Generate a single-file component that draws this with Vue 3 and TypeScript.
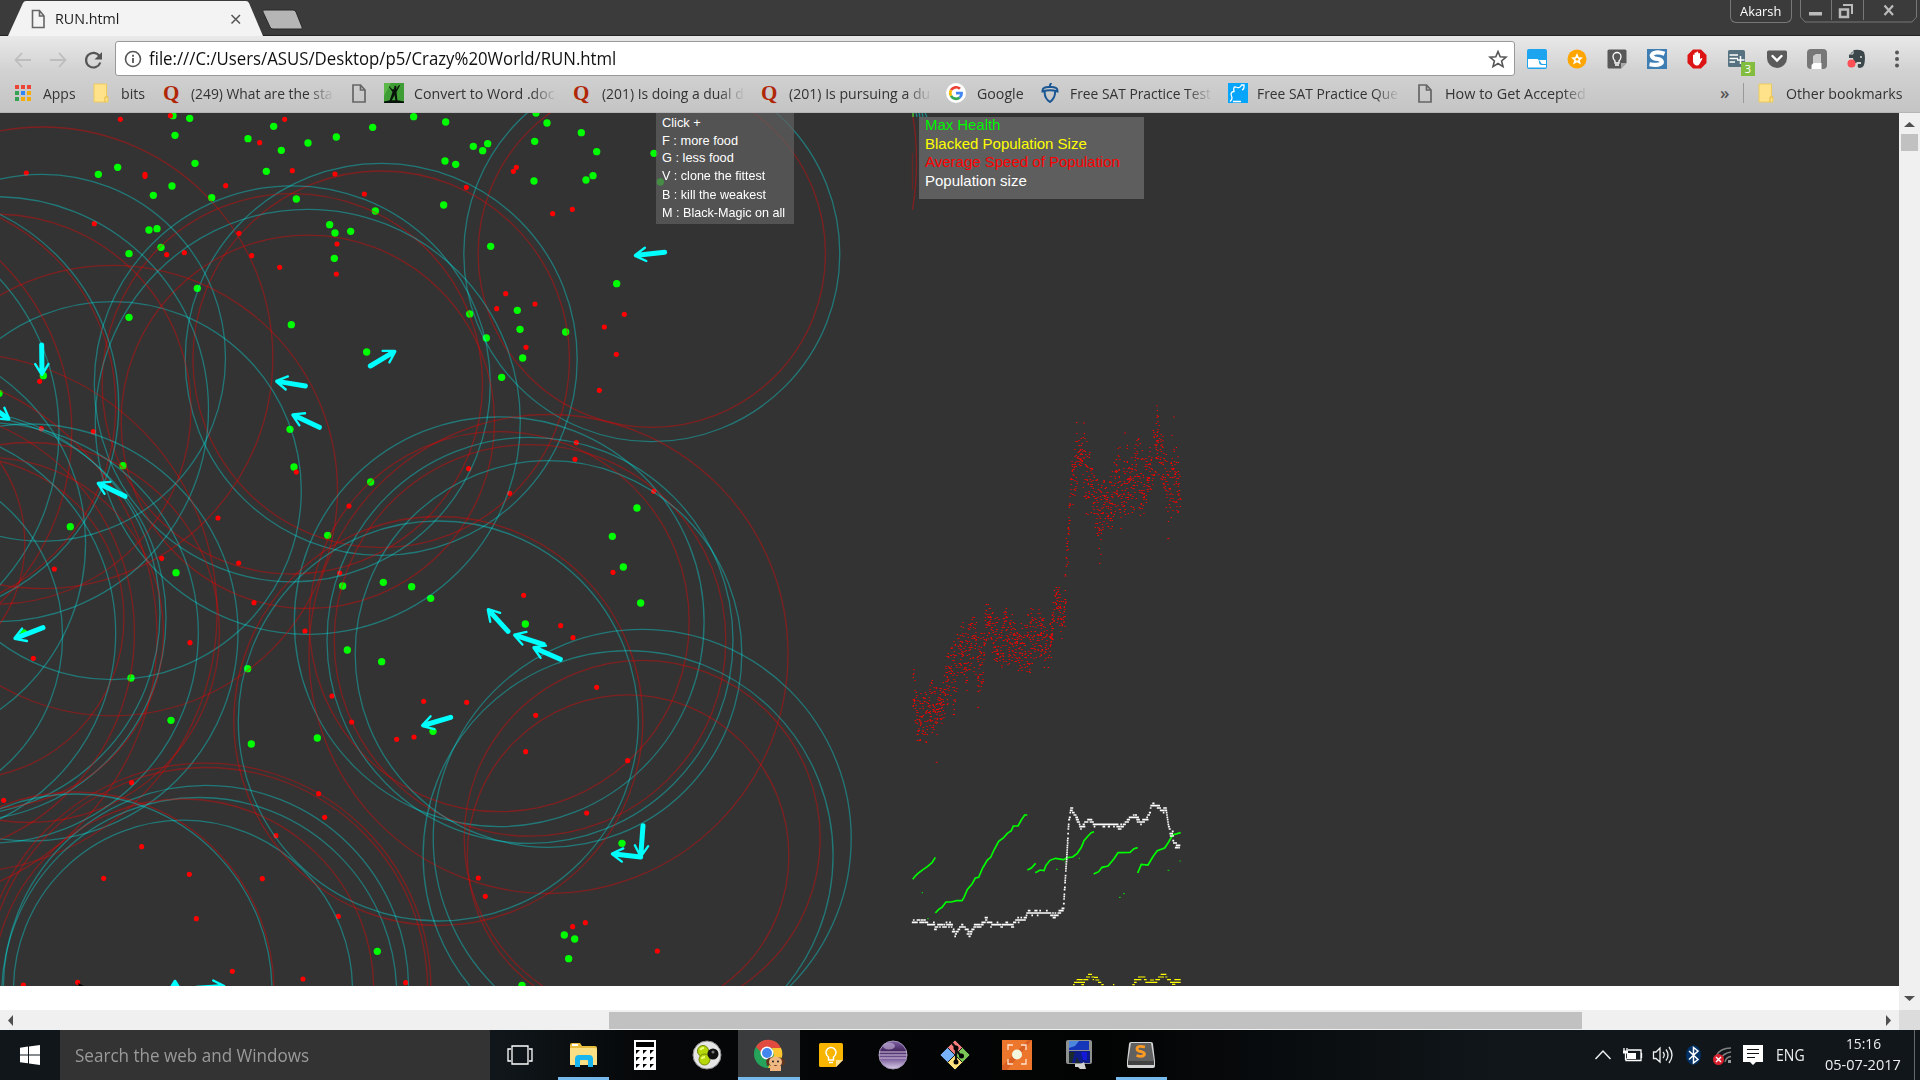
<script setup lang="ts">
type Pt = [number, number]

/* Squeezes a text run to a given pixel width */
const vFit = {
  mounted(el: HTMLElement, b: { value: number }) {
    const w = el.offsetWidth
    if (w > 0) {
      el.style.transform = `scaleX(${b.value / w})`
      el.style.width = `${w}px`
      el.style.marginRight = `${b.value - w}px`
    }
  },
}

const bookmarks = [
  { w: 78, gap: 28, icon: 'apps', text: 'Apps', tw: 33 },
  { w: 70, gap: 28, icon: 'folder', text: 'bits', tw: 24 },
  { w: 189, gap: 28, icon: 'quora', text: '(249) What are the sta', tw: 142 },
  { w: 32, gap: 28, icon: 'page', text: '', tw: 0 },
  { w: 189, gap: 30, icon: 'word', text: 'Convert to Word .doc', tw: 141 },
  { w: 188, gap: 29, icon: 'quora', text: '(201) Is doing a dual d', tw: 142 },
  { w: 185, gap: 28, icon: 'quora', text: '(201) Is pursuing a du', tw: 141 },
  { w: 95, gap: 30.5, icon: 'google', text: 'Google', tw: 47 },
  { w: 187, gap: 29, icon: 'acorn', text: 'Free SAT Practice Test', tw: 141 },
  { w: 190, gap: 29, icon: 'cat', text: 'Free SAT Practice Que', tw: 141 },
  { w: 180, gap: 27, icon: 'page', text: 'How to Get Accepted', tw: 141 },
]

/* cx, cy, radius of food sense, radius of poison sense */
const senses: [number, number, number, number][] = [
  [651.8, 253.7, 188, 173.7], [381.2, 359.3, 196, 188.3], [292.3, 383.8, 198, 190.2],
  [307.8, 421.8, 212.5, 186.7], [42, 357.8, 183.5, 230.8], [112.3, 490.6, 189, 225.2],
  [-4, 409.2, 212.5, 195], [-94.3, 405.4, 213, 210], [-168, 432, 227, 239.8],
  [29.5, 632.5, 208.5, 190], [-119, 543, 204.6, 143.8], [-113, 636, 175.6, 270],
  [-43, 613, 203, 260], [-37, 618, 203, 161], [-91.6, 633, 207.3, 226],
  [-12, 633, 210.3, 175.5], [206, 988, 202.6, 224.8], [199.2, 995, 197.5, 0],
  [206.5, 988.5, 0, 221], [183, 989.7, 169.5, 190.7], [75, 991, 197, 199],
  [499.2, 621.7, 204.9, 190], [530, 640.4, 203, 195.8], [548.5, 654, 193.3, 239.5],
  [438.3, 721, 200, 204.5], [642.2, 838.4, 209, 178], [628.1, 855.6, 205, 160.8],
]

/* World tiles: coordinates are in thirds of a pixel */
interface Tile { x: number; y: number; food: Pt[]; poison: Pt[]; bots: [number, number, number, number][] }
const tiles: Tile[] = [
  {
    x: 0, y: 110,
    food: [[519, 17], [569, 25], [525, 76], [744, 86], [821, 49], [844, 121], [924, 99], [1009, 81], [1118, 52], [1241, 20], [585, 160], [353, 172], [295, 193], [799, 184], [516, 228], [460, 256], [635, 263], [889, 267], [1126, 303], [447, 360], [471, 356], [989, 344], [1005, 369], [1052, 364], [483, 412], [387, 431], [1003, 445], [592, 535], [387, 622], [874, 644], [1100, 726], [130, 797], [-3, 850], [870, 958], [369, 1067], [882, 1071], [1112, 1116], [211, 1250], [983, 1276]],
    poison: [[361, 28], [511, 17], [854, 28], [779, 98], [79, 189], [435, 193], [435, 199], [877, 182], [1005, 192], [677, 227], [1093, 252], [283, 341], [717, 370], [1011, 402], [500, 434], [553, 428], [755, 437], [839, 472], [1009, 492], [119, 814], [124, 956], [280, 965], [889, 1086], [1047, 1188], [654, 1224]],
    bots: [[125, 705, 126, 797], [1111, 768, 1188, 722], [916, 828, 826, 813], [958, 952, 875, 913], [375, 1159, 291, 1118], [-40, 880, 30, 930]],
  },
  {
    x: 430, y: 110,
    food: [[318, 9], [47, 36], [351, 39], [454, 68], [314, 94], [130, 109], [173, 101], [158, 122], [500, 125], [672, 130], [45, 153], [77, 163], [312, 213], [489, 197], [468, 210], [691, 216], [41, 285], [182, 409], [560, 521], [262, 601], [119, 612], [270, 658], [407, 666], [169, 684], [278, 744], [215, 802], [621, 1194], [547, 1279]],
    poison: [[259, 172], [250, 184], [109, 232], [427, 298], [368, 311], [227, 551], [315, 582], [200, 596], [583, 613], [523, 651], [288, 712], [559, 733], [508, 841], [439, 998], [435, 1048], [116, 1076], [239, 1150], [671, 1144]],
    bots: [[704, 427, 612, 437]],
  },
  {
    x: 0, y: 545,
    food: [[528, 83], [1028, 123], [1150, 112], [1235, 125], [1292, 160], [71, 264], [1042, 315], [1145, 350], [743, 371], [393, 399], [513, 526], [952, 579], [754, 597], [1299, 559], [1132, 1219]],
    poison: [[163, 72], [485, 40], [716, 54], [1019, 84], [762, 173], [915, 258], [570, 293], [100, 340], [996, 453], [1271, 469], [1055, 531], [1242, 576], [1190, 583], [395, 713], [956, 746], [11, 766], [974, 817], [828, 872], [425, 905], [311, 1000], [568, 988], [787, 1001], [1015, 1114], [589, 1121], [697, 1279], [909, 1302], [1217, 1313], [233, 1312], [70, 1320]],
    bots: [[129, 248, 41, 282], [525, 1400, 525, 1305], [590, 1330, 676, 1324]],
  },
  {
    x: 430, y: 545,
    food: [[580, 66], [632, 174], [286, 237], [576, 895], [403, 1170], [434, 1182], [416, 1241], [276, 1321]],
    poison: [[549, 82], [281, 151], [392, 242], [429, 278], [500, 427], [110, 472], [317, 511], [287, 620], [593, 647], [470, 804], [145, 999], [166, 1054], [466, 1133], [428, 1145], [682, 1218]],
    bots: [[62, 517, -26, 543], [234, 259, 172, 191], [340, 298, 250, 269], [391, 343, 308, 306], [639, 842, 632, 937], [632, 936, 543, 926]],
  },
]

function body([x1, y1, x2, y2]: number[]): string {
  const l = Math.hypot(x2 - x1, y2 - y1)
  const ux = (x2 - x1) / l
  const uy = (y2 - y1) / l
  return `M${x1} ${y1}L${x2 - ux * 16} ${y2 - uy * 16}`
}
function wings([x1, y1, x2, y2]: number[]): string {
  const l = Math.hypot(x2 - x1, y2 - y1)
  const ux = (x2 - x1) / l
  const uy = (y2 - y1) / l
  const p = (b: number, s: number) => `${x2 - ux * b - uy * s} ${y2 - uy * b + ux * s}`
  return `M${p(35, 20)}L${p(3, 1)}L${p(3, -1)}L${p(35, -20)}M${p(3, 0)}L${p(18, 8)}L${p(18, -8)}Z`
}

let seed = 20170705
function rnd(): number {
  seed = (seed * 1664525 + 1013904223) % 4294967296
  return seed / 4294967296
}

/* Average speed plot: x, upper and lower bound of the cloud */
const cloud: [number, number, number][] = [
  [68, 810, 930], [76, 900, 1030], [85, 930, 1075], [95, 840, 1040], [108, 900, 1080], [120, 840, 1020], [135, 880, 1060], [145, 890, 1010], [158, 860, 1000], [168, 790, 950], [180, 770, 920], [190, 750, 990], [205, 700, 850], [218, 690, 850], [228, 700, 920], [240, 690, 870], [255, 660, 860], [265, 690, 920], [278, 730, 900], [286, 635, 760], [300, 640, 740], [310, 680, 830], [330, 670, 830], [352, 640, 830], [370, 670, 820], [385, 690, 850], [400, 690, 840], [415, 660, 860], [435, 630, 820], [455, 660, 830], [470, 710, 850], [485, 670, 790], [493, 590, 730], [505, 585, 700], [515, 630, 750], [524, 600, 700], [526, 480, 560], [531, 420, 520], [536, 330, 420], [542, 200, 350], [550, 180, 350], [558, 100, 290], [570, 140, 270], [580, 110, 320], [590, 160, 380], [600, 190, 370], [612, 240, 400], [628, 280, 500], [640, 250, 400], [655, 270, 450], [670, 210, 400], [685, 160, 370], [695, 250, 450], [705, 150, 400], [720, 190, 380], [738, 130, 350], [755, 170, 390], [770, 210, 330], [785, 120, 300], [800, 50, 240], [812, 90, 290], [825, 200, 330], [835, 180, 440], [850, 100, 380], [862, 180, 370], [870, 230, 390],
]
const speedBright: string[] = []
const speedDim: string[] = []
for (let i = 0; i < cloud.length - 1; i++) {
  const [xa, la, ha] = cloud[i]
  const [xb, lb, hb] = cloud[i + 1]
  const n = Math.max(3, Math.round((xb - xa) * 2))
  for (let k = 0; k < n; k++) {
    const t = rnd()
    const lo = la + (lb - la) * t
    const hi = ha + (hb - ha) * t
    const x = Math.round((xa + (xb - xa) * t) / 3) * 3
    const f = rnd() < 0.5 ? rnd() : (rnd() + rnd()) / 2
    const y = Math.round((lo + (hi - lo) * f) / 3) * 3 + 1.5
    if (rnd() < 0.55) speedBright.push(`M${x - 1} ${y}h4`)
    else speedDim.push(`M${x} ${y}h6`)
  }
}
const speedBrightPath = speedBright.join('')
const speedDimPath = speedDim.join('')

const population: Pt[] = [[68, 424], [76, 430], [84, 420], [95, 428], [105, 422], [115, 433], [130, 434], [138, 440], [150, 434], [165, 440], [180, 430], [188, 446], [197, 462], [205, 450], [216, 436], [228, 446], [238, 462], [248, 448], [260, 436], [272, 438], [288, 420], [300, 430], [318, 434], [335, 438], [355, 432], [370, 440], [378, 420], [405, 418], [416, 392], [425, 402], [440, 395], [455, 402], [480, 398], [492, 412], [505, 402], [520, 388], [524, 330], [530, 235], [536, 130], [543, 86], [550, 100], [560, 110], [573, 145], [585, 128], [603, 116], [612, 136], [640, 135], [680, 135], [692, 145], [705, 130], [722, 112], [740, 115], [753, 128], [770, 118], [788, 70], [800, 80], [815, 90], [828, 85], [835, 130], [842, 170], [848, 155], [850, 185], [860, 197], [870, 195]]
const popDots: string[] = []
for (let i = 0; i < population.length - 1; i++) {
  const [xa, ya] = population[i]
  const [xb, yb] = population[i + 1]
  const n = Math.max(1, Math.ceil(Math.max((xb - xa) / 1.6, Math.abs(yb - ya) / 7)))
  for (let k = 0; k < n; k++) {
    const t = k / n
    const r = rnd()
    const j = r < 0.1 ? -1 : r > 0.9 ? 1 : 0
    const y = (Math.round((ya + (yb - ya) * t) / 7) + j) * 7
    popDots.push(`M${(xa + (xb - xa) * t - 2.5).toFixed(1)} ${y}h5`)
  }
}
const popPath = popDots.join('')

const health = [
  '68,298 76,288 84,280 100,268 112,260 126,248 136,232',
  '136,399 146,388 156,382 168,366 184,366 200,362 216,362 222,352 232,328 246,312 256,294 266,292 278,264 292,240 302,232 312,210 326,184 340,174 352,160 364,152 370,138 384,138 394,120 404,105 412,105',
  '412,270 424,264 437,250',
  '436,278 450,270 462,272 468,256 480,241 496,235 520,239 532,233 548,231 562,220 574,202 582,182 594,168 604,158 612,155',
  '611,282 626,275 636,262 654,258 672,236 684,218 720,217 732,206 743,203',
  '743,279 754,253 774,255 790,228 802,212 824,204 836,186 848,165 862,161 872,158',
]
</script>

<template>
  <div class="screen">
    <header class="titlebar">
      <svg class="tabshape" width="310" height="36" viewBox="0 0 310 36">
        <path d="M8 36L23 3Q24 1 26 1H246Q248 1 249 3L263 36Z" fill="#f3f3f3" />
        <path d="M264 10H293Q295 10 296 12L302 27Q303 29 301 29H273Q271 29 270 27L263 12Q262 10 264 10Z" fill="#b5b5b5" stroke="#292929" />
        <path d="M32.5 10.5H39.5L44 16V27.5H32.500Z M39.500 10.500V16H44" fill="none" stroke="#666" stroke-width="1.6" />
        <path d="M231.500 15L240 23.500M240 15L231.500 23.500" stroke="#555" stroke-width="1.500" />
      </svg>
      <span class="tabtitle"><span v-fit="64" class="fit">RUN.html</span></span>
      <div class="user"><span v-fit="41" class="fit">Akarsh</span></div>
      <div class="wincontrols">
        <svg width="117" height="23" viewBox="0 0 117 23">
          <path d="M.5 0V17L5 22H112L116.500 17V0M31.500 0V20M63.500 0V20" fill="none" stroke="#777" />
          <rect x="9" y="12" width="13" height="3.500" fill="#bbb" />
          <path d="M43 5H52V14" fill="none" stroke="#bbb" stroke-width="2" />
          <path d="M40 9.500H48V17H40Z" fill="none" stroke="#bbb" stroke-width="2.500" />
          <path d="M84.500 5.500L93 15M93 5.500L84.500 15" stroke="#bbb" stroke-width="2.200" />
        </svg>
      </div>
    </header>

    <div class="chrome">
      <div class="toolbar">
        <svg class="nav" width="115" height="40" viewBox="0 38 115 40">
          <path d="M31 59H16M22 52L15.500 59L22 66M50 59H65M59 52L65.500 59L59 66" fill="none" stroke="#bdbdbd" stroke-width="1.800" />
          <path d="M99.500 55.200A7.300 7.300 0 1 0 100.300 61.500" fill="none" stroke="#555" stroke-width="2.200" />
          <path d="M102 51V58.500H94.500Z" fill="#555" />
        </svg>
        <div class="omnibox">
          <svg width="18" height="18" viewBox="0 0 18 18"><circle cx="9" cy="9" r="7.500" fill="none" stroke="#555" stroke-width="1.600" /><path d="M9 8V13M9 4.800V6.700" stroke="#555" stroke-width="1.800" /></svg>
          <span class="url"><span v-fit="467" class="fit">file:///C:/Users/ASUS/Desktop/p5/Crazy%20World/RUN.html</span></span>
          <svg class="star" width="20" height="20" viewBox="0 0 20 20"><path d="M10 2.500L12.200 7.800L18 8.200L13.600 12L15 17.600L10 14.500L5 17.600L6.400 12L2 8.200L7.800 7.800Z" fill="none" stroke="#555" stroke-width="1.600" /></svg>
        </div>
        <div class="exts">
          <div><svg viewBox="0 0 20 20"><rect width="20" height="20" rx="2" fill="#1ca4ee" /><path d="M1 10H10Q12 10 12 13T15 16H19V18.500H1Z" fill="#fff" /><path d="M12 11H19V15H16Q14 15 13.500 13Z" fill="#fff" /></svg></div>
          <div><svg viewBox="0 0 20 20"><circle cx="10" cy="10" r="9.500" fill="#ffa500" /><path d="M10 4L11.800 8.200L16 8.500L12.800 11.300L13.900 15.500L10 13.200L6.100 15.500L7.200 11.300L4 8.500L8.200 8.200Z" fill="#fff" /><circle cx="10" cy="10.300" r="1.400" fill="#ffa500" /></svg></div>
          <div><svg viewBox="0 0 20 20"><path d="M2 .5H18Q19.500 .5 19.500 2V14L14 19.500H2Q.5 19.500 .5 18V2Q.5 .5 2 .5Z" fill="#585858" /><path d="M14 19.500V14H19.500Z" fill="#aaa" /><path d="M8 12Q6 10 6 7.500A4 4 0 0 1 14 7.500Q14 10 12 12V14H8ZM8 16H12" fill="none" stroke="#fff" stroke-width="1.300" /></svg></div>
          <div><svg viewBox="0 0 20 20"><rect width="20" height="20" fill="#3f7eb3" /><path d="M17.500 4.800Q13 3 9 3.500Q4 4.500 5 7.300Q6 9.500 11 10Q15.500 11 14.800 13.800Q13 17 2.500 15.300" fill="none" stroke="#fff" stroke-width="4.200" /></svg></div>
          <div><svg viewBox="0 0 20 20"><path d="M6 .5H14L19.500 6V14L14 19.500H6L.5 14V6Z" fill="#dd1414" /><path d="M6 10V6Q6.700 5 7.500 6V4Q8.500 3 9.300 4V3Q10.300 2 11.200 3V4.500Q12.200 3.700 13 4.500V10L14.500 9Q16 9 15 10.500L12.500 15Q11.500 17 9 16.500Q6.500 16 6 13Z" fill="#fff" /></svg></div>
          <div class="badged"><svg viewBox="0 0 20 20"><rect x="1" y="1" width="17" height="17" rx="1.500" fill="#56717f" /><path d="M2.500 6H11M2.500 9.500H11M2.500 13H8M13.500 7V15M10 11H17.500" stroke="#fff" stroke-width="1.500" /></svg><b>3</b></div>
          <div><svg viewBox="0 0 20 20"><path d="M1.500 1.500H18.500Q20 1.500 20 3V9A10 10 0 0 1 0 9V3Q0 1.500 1.500 1.500Z" fill="#5b5b5b" /><path d="M5.500 7L10 11.500L14.500 7" fill="none" stroke="#fff" stroke-width="2.400" stroke-linecap="round" /></svg></div>
          <div><svg viewBox="0 0 20 20"><rect x="0" y="0" width="20" height="20" rx="4" fill="#777" /><path d="M6 14V7L9 5H14V14Z" fill="#ccc" /><path d="M4.500 20V16L6.500 14H14.500V20Z" fill="#fff" /></svg></div>
          <div><svg viewBox="0 0 20 20"><path d="M2 6L7 1Q14 0 17 3Q19 9 17 16Q16 19 12 19Q10 18 11 15H14V13H10Q9 15 7 13L6 9H2Z" fill="#3c474b" /><path d="M3 5H6V2" fill="none" stroke="#ddd" /><circle cx="4.500" cy="14.500" r="4" fill="#ff4f56" /><circle cx="14" cy="8" r="1" fill="#ddd" /></svg></div>
        </div>
        <svg class="menu" width="6" height="20" viewBox="0 0 6 20"><circle cx="3" cy="3.500" r="2" fill="#555" /><circle cx="3" cy="10" r="2" fill="#555" /><circle cx="3" cy="16.500" r="2" fill="#555" /></svg>
      </div>

      <div class="bookmarks">
        <div v-for="(b, i) in bookmarks" :key="i" class="bm" :style="{ width: b.w + 'px' }">
          <span class="bmicon" :style="{ width: b.gap + 'px' }">
            <svg v-if="b.icon === 'apps'" width="16" height="18" viewBox="0 0 16 18">
              <path d="M0 1h4v4H0zM6 1h4v4H6zM12 1h4v4H12z" fill="#ee4438" /><path d="M0 7h4v4H0z" fill="#34a253" /><path d="M6 7h4v4H6z" fill="#2f86f5" /><path d="M12 7h4v4H12zM6 13h4v4H6zM12 13h4v4H12z" fill="#f5ac06" /><path d="M0 13h4v4H0z" fill="#34a253" />
            </svg>
            <svg v-else-if="b.icon === 'folder'" width="16" height="20" viewBox="0 0 16 20"><path d="M1 1H13.500V13L15 14V19H1Z" fill="#ffe28a" stroke="#eccb5c" /><path d="M12 19V14H15" fill="none" stroke="#e3b93e" /></svg>
            <span v-else-if="b.icon === 'quora'" class="q">Q</span>
            <svg v-else-if="b.icon === 'page'" width="15" height="19" viewBox="0 0 15 19"><path d="M1 1H8.500L13 6V18H1ZM8.500 1V6H13" fill="none" stroke="#666" stroke-width="1.700" /></svg>
            <svg v-else-if="b.icon === 'word'" width="20" height="20" viewBox="0 0 20 20"><rect width="20" height="20" fill="#3f9d35" /><path d="M0 0H7L0 13Z" fill="#5cb848" /><path d="M5 3L8.500 6.500L10 6L10.500 3Q12 2 12.500 4L12 6.500L15 2L16 2.500L12.500 9L13.500 18H11.500L10.500 12L7.500 18H5.500L8.500 9L5 4Z" fill="#07120a" /><path d="M0 20V18.500Q10 16 20 18.500V20Z" fill="#07120a" /></svg>
            <svg v-else-if="b.icon === 'google'" width="20" height="20" viewBox="0 0 20 20"><circle cx="10" cy="10" r="10" fill="#fff" /><g fill="none" stroke-width="2.700"><path d="M14 5.800A5.800 5.800 0 0 0 5 7.200" stroke="#ea4335" /><path d="M5 7.200A5.800 5.800 0 0 0 5 12.800" stroke="#fbbc05" /><path d="M5 12.800A5.800 5.800 0 0 0 13.700 14.500" stroke="#34a853" /><path d="M13.700 14.500Q15.800 12.700 15.600 10.200H10" stroke="#4285f4" /></g></svg>
            <svg v-else-if="b.icon === 'acorn'" width="19" height="20" viewBox="0 0 19 20"><path d="M9 4Q8.500 1.500 10.500 0M1.500 8.500Q1 3.500 9 4Q17 3.500 16.500 8.500Q9 6 1.500 8.500ZM3.800 8.500Q3 15 9 19Q14.500 15 14 8.500" fill="none" stroke="#1b5795" stroke-width="2" /></svg>
            <svg v-else width="20" height="20" viewBox="0 0 20 20"><rect width="20" height="20" fill="#05a5fb" /><path d="M2 18.500Q5 16 3.500 13Q2 9 6 8.500Q5 3.500 7.500 4Q12 6 13.500 2L16 2Q16.500 6 14 7M5 18.500H13" fill="none" stroke="#fff" stroke-width="1.300" /></svg>
          </span>
          <span class="bmtext" :class="{ fade: b.tw > 100 }"><span v-if="b.text" v-fit="b.tw" class="fit">{{ b.text }}</span></span>
        </div>
        <span class="more">»</span>
        <i class="divider"></i>
        <svg width="16" height="20" viewBox="0 0 16 20"><path d="M1 1H13.500V13L15 14V19H1Z" fill="#ffe28a" stroke="#eccb5c" /><path d="M12 19V14H15" fill="none" stroke="#e3b93e" /></svg>
        <span class="other"><span v-fit="116" class="fit">Other bookmarks</span></span>
      </div>
    </div>

    <main class="page">
      <div class="view">
        <div class="canvas">
          <svg width="1899" height="873" viewBox="0 113 1899 873">
            <template v-for="(t, i) in tiles" :key="i">
              <g :transform="`translate(${t.x} ${t.y}) scale(.33333)`">
                <circle v-for="(p, k) in t.food" :key="'f' + k" :cx="p[0]" :cy="p[1]" r="11" fill="#0f0" />
                <circle v-for="(p, k) in t.poison" :key="'p' + k" :cx="p[0]" :cy="p[1]" r="7.700" fill="#f00" />
              </g>
            </template>
            <g fill="none" stroke-width="1.300">
              <template v-for="(s, i) in senses" :key="i">
                <circle v-if="s[2]" :cx="s[0]" :cy="s[1]" :r="s[2]" stroke="#0ff" stroke-opacity=".34" />
                <circle v-if="s[3]" :cx="s[0]" :cy="s[1]" :r="s[3]" stroke="#f00" stroke-opacity=".38" />
              </template>
              <path d="M912.500 114Q920.500 160 912.500 210" stroke="#f00" stroke-opacity=".4" />
              <path d="M912.500 153V190" stroke="#f00" stroke-opacity=".25" />
              <path d="M913 113V117" stroke="#3c3" stroke-opacity=".7" stroke-width="2" />
              <path d="M916 113l1 4M919 113l1 4M922 113l1 4M925 113l2 4" stroke="#0ff" stroke-opacity=".4" />
            </g>
            <g v-for="(t, i) in tiles" :key="'b' + i" :transform="`translate(${t.x} ${t.y}) scale(.33333)`" stroke="#0ff" fill="#0ff" stroke-linecap="round" stroke-linejoin="round">
              <template v-for="(b, k) in t.bots" :key="k">
                <path :d="body(b)" stroke-width="15" />
                <path :d="wings(b)" fill="none" stroke-width="7" />
              </template>
            </g>
            <g transform="translate(890 390) scale(.33333)" stroke="#f00" stroke-width="3">
              <path :d="speedBrightPath" stroke-opacity=".95" />
              <path :d="speedDimPath" stroke-opacity=".6" />
              <path d="M137 1117h5M799 48h4M558 98h4M580 99h5M850 81h4M703 129h5M524 558h5M533 516h4M627 520h4M631 493h4M262 952h5M832 446h6" />
            </g>
            <g transform="translate(890 780) scale(.33333)" fill="none">
              <polyline v-for="(h, i) in health" :key="i" :points="h" stroke="#0f0" stroke-width="5" />
              <path d="M95 338h4M112 416h4M498 268h5M566 235h4M524 246h4M687 352h5M699 341h5M833 271h5M868 243h5" stroke="#0f0" stroke-width="3.500" stroke-opacity=".7" />
              <path :d="popPath" stroke="#fff" stroke-width="5" />
              <path d="M549 614h5M552 607h20M560 599h18M572 607h13M574 614h8M580 599h15M588 591h12M594 583h12M604 591h8M608 599h4M612 592h12M616 600h12M624 607h10M634 614h7M669 614h4M727 614h7M732 607h8M732 599h22M744 591h22M762 599h8M766 607h36M780 600h12M796 599h14M804 591h18M812 583h17M826 591h6M831 599h12M840 607h32M846 613h10M853 599h19" stroke="#ff0" stroke-width="3.500" />
            </g>
            <path d="M78 983L84 986H79Z" fill="#000" />
          </svg>
          <div class="keys">
            <p>Click +</p><p>F : more food</p><p>G : less food</p>
            <p><span v-fit="103" class="fit">V : clone the fittest</span></p>
            <p class="low"><span v-fit="104" class="fit">B : kill the weakest</span></p>
            <p class="low"><span v-fit="123" class="fit">M : Black-Magic on all</span></p>
          </div>
          <div class="legend">
            <p class="g"><span v-fit="75.5" class="fit">Max Health</span></p>
            <p class="y"><span v-fit="162" class="fit">Blacked Population Size</span></p>
            <p class="r"><span v-fit="195" class="fit">Average Speed of Population</span></p>
            <p><span v-fit="102" class="fit">Population size</span></p>
          </div>
        </div>
        <div class="hscroll">
          <svg width="609" height="20" viewBox="0 0 609 20"><path d="M13 5V16L8 10.500Z" fill="#505050" /></svg>
          <div class="hthumb"></div>
          <svg width="317" height="20" viewBox="0 0 317 20"><path d="M304 5V16L309 10.500Z" fill="#505050" /></svg>
        </div>
      </div>
      <div class="vscroll">
        <svg width="21" height="21" viewBox="0 0 21 21"><path d="M5 14H16L10.500 9Z" fill="#505050" /></svg>
        <div class="vthumb"></div>
        <svg class="down" width="21" height="21" viewBox="0 0 21 21"><path d="M5 7H16L10.500 12Z" fill="#505050" /></svg>
        <div class="corner"></div>
      </div>
    </main>

    <footer class="taskbar">
      <div class="start"><svg width="20" height="20" viewBox="0 0 20 20"><path d="M0 2.800L8 1.600V9.400H0ZM9 1.400L20 0V9.400H9ZM0 10.500H8V18.300L0 17.200ZM9 10.500H20V20L9 18.500Z" fill="#fff" /></svg></div>
      <div class="search"><span v-fit="234" class="fit">Search the web and Windows</span></div>
      <div class="apps">
        <div class="tv"><svg width="26" height="20" viewBox="0 0 26 20"><path d="M5 1H21V19H5ZM4 4H1V16H4M22 4H25V16H22" fill="none" stroke="#fff" stroke-width="1.300" /></svg></div>
        <div class="open"><svg width="28" height="24" viewBox="0 0 28 24"><path d="M1 2Q1 0 3 0H11L13 3H26Q28 3 28 5V22H1Z" fill="#e8bd3e" /><path d="M1 5H26Q28 5 28 7V22H1Z" fill="#fbdf85" /><path d="M3 1H9V3H3Z" fill="#fff" /><path d="M6 24V16Q6 12 10 12H20Q24 12 24 16V24H19V18Q19 17 18 17H12Q11 17 11 18V24Z" fill="#18b5ee" /></svg></div>
        <div><svg width="22" height="30" viewBox="0 0 22 30"><rect width="22" height="30" fill="#fff" /><path d="M2 2H20V7H2ZM2 10H6L2 14ZM9 10H13L9 14ZM16 10H20L16 14ZM2 17H6L2 21ZM9 17H13L9 21ZM16 17H20L16 21ZM2 24H6L2 28ZM9 24H13L9 28ZM16 24H20L16 28Z" fill="#000" /></svg></div>
        <div><svg width="30" height="30" viewBox="0 0 30 30"><circle cx="15" cy="15" r="14" fill="#e6e6e6" stroke="#8b8b8b" /><circle cx="11" cy="11" r="5.500" fill="#b4d80a" stroke="#71880a" /><circle cx="12.500" cy="19.500" r="5.500" fill="#b4d80a" stroke="#71880a" /><circle cx="21" cy="14" r="5.500" fill="#111" /><path d="M8.500 10Q9 8 12 8M10 19Q10 17 13 17" fill="none" stroke="#ecff78" stroke-width="2" /><circle cx="21" cy="12" r="1.500" fill="#777" /></svg></div>
        <div class="open active"><svg width="32" height="32" viewBox="0 0 32 32"><circle cx="15" cy="15" r="14" fill="#25a35a" /><path d="M3 8A14 14 0 0 1 28 9H15A6 6 0 0 0 9 14Z" fill="#e14a3f" /><path d="M28 9A14 14 0 0 1 15 29L21 16L19 9Z" fill="#fbc62f" /><circle cx="14" cy="14" r="6.500" fill="#fff" /><circle cx="14" cy="14" r="5" fill="#4286ee" /><path d="M13 22Q14 18 22 18Q31 18 32 22L31 27L28 25V32H17V26L14 27Z" fill="#60361e" /><ellipse cx="22.500" cy="23" rx="6.500" ry="5.500" fill="#eeb982" /><path d="M17 27H28V32H17Z" fill="#f0b57e" /><circle cx="20" cy="22.500" r="1" fill="#222" /><circle cx="25" cy="22.500" r="1" fill="#222" /><path d="M20.500 26Q22.500 28 24.500 26Z" fill="#6d3921" /></svg></div>
        <div><svg width="24" height="24" viewBox="0 0 24 24"><path d="M1.500 0H22.500Q24 0 24 1.500V17L17 24H1.500Q0 24 0 22.500V1.500Q0 0 1.500 0Z" fill="#f7b500" /><path d="M17 24V17H24Z" fill="#ffe291" /><path d="M9.500 14Q7 12 7 9.500A5 5 0 0 1 17 9.500Q17 12 14.500 14V17H9.500ZM10 19.500H14" fill="none" stroke="#fff" stroke-width="1.500" /></svg></div>
        <div><svg width="30" height="30" viewBox="0 0 30 30"><defs><linearGradient id="ec" x2="0" y2="1"><stop offset="0" stop-color="#8060a5" /><stop offset=".35" stop-color="#44265f" /><stop offset=".6" stop-color="#725393" /><stop offset="1" stop-color="#d9cce9" /></linearGradient></defs><circle cx="15" cy="15" r="14" fill="url(#ec)" stroke="#a497b8" /><path d="M1 12H29M1 15H29M2 18H28" stroke="#cfc4dd" stroke-width="1" /><ellipse cx="11" cy="6" rx="6" ry="3.500" fill="#c8b8dc" opacity=".6" /></svg></div>
        <div><svg width="32" height="32" viewBox="0 0 32 32"><g stroke="#191919"><path d="M16 1L23.500 8.500L16 16L8.500 8.500Z" fill="#f47c7c" /><path d="M8.500 8.500L16 16L8.500 23.500L1 16Z" fill="#77b1fa" /><path d="M23.500 8.500L31 16L23.500 23.500L16 16Z" fill="#79c657" /><path d="M16 16L23.500 23.500L16 31L8.500 23.500Z" fill="#ffe27c" /></g><path d="M13 4L17 9V23M17 11L22 17" fill="none" stroke="#111" stroke-width="2.200" /><circle cx="17" cy="9" r="2.500" /><circle cx="17" cy="23" r="2.500" /><circle cx="22.500" cy="17" r="2.500" /></svg></div>
        <div><svg width="30" height="30" viewBox="0 0 30 30"><rect width="30" height="30" fill="#ed762d" /><path d="M0 26L26 0H30L5 30H0Z" fill="#d95f22" /><circle cx="15" cy="14.500" r="5" fill="#f3f7df" /><path d="M6 10V5H11M19 5H24V10M24 19V24H19M11 24H6V19" fill="none" stroke="#ffe2ce" stroke-width="1.300" /></svg></div>
        <div><svg width="28" height="30" viewBox="0 0 28 30"><rect x="1" y="0" width="26" height="24" rx="2" fill="#8f918f" /><rect x="4" y="1" width="20" height="9" fill="#1536b8" /><path d="M4 1H14L10 6L4 8Z" fill="#4d86dd" /><rect x="4" y="11" width="21" height="12" fill="#0d1c86" /><path d="M4 12H10L7 23H4ZM12 17L15 23H10Z" fill="#1c2a2e" /><path d="M16 12H22V20H18Z" fill="#1418d8" /><path d="M10 24H16L19 22L21 29H15L13 27H10Z" fill="#d2d2d2" /></svg></div>
        <div class="open"><svg width="28" height="26" viewBox="0 0 28 26"><path d="M4 0H24Q26 0 26 2L28 19V24Q28 26 26 26H2Q0 26 0 24V19L2 2Q2 0 4 0Z" fill="#d4d4d4" /><path d="M4 1H24L27 19H1Z" fill="#606060" /><path d="M1 19H27V23H1Z" fill="#424242" /><path d="M18 5Q10 3 10 7Q10 9 14 9.500Q18 10.500 17.500 12.500Q16 15.500 9.500 13.500" fill="none" stroke="#ff9a22" stroke-width="2.800" /></svg></div>
      </div>
      <div class="tray">
        <svg width="190" height="50" viewBox="1585 1030 190 50">
          <path d="M1595.500 1059L1603 1051L1610.500 1059" fill="none" stroke="#eee" stroke-width="1.500" />
          <path d="M1628 1050H1641V1060.500H1626V1058M1641.500 1053V1058M1625.500 1053V1060M1624 1048V1051M1627 1048V1051" fill="none" stroke="#fff" stroke-width="1.300" /><path d="M1627 1053H1636V1059H1627ZM1623 1050.500H1628V1053.500H1623Z" fill="#fff" />
          <path d="M1653.500 1052H1656L1660 1048V1062L1656 1058.500H1653.500ZM1663 1052Q1665.500 1055 1663 1058M1666 1049.500Q1670 1055 1666 1060.500M1669 1047Q1675 1055 1669 1063" fill="none" stroke="#eee" stroke-width="1.300" />
          <ellipse cx="1693.500" cy="1055" rx="7.500" ry="9.800" fill="#003064" /><path d="M1689 1051L1698 1059.500L1693.500 1063V1047.500L1698 1051L1689 1059.500" fill="none" stroke="#fff" stroke-width="1.500" />
          <path d="M1716 1056Q1720 1048 1731 1048M1720 1060Q1723 1053 1731 1052M1725 1062Q1726 1057 1731 1056.500" fill="none" stroke="#818181" stroke-width="1.300" /><rect x="1728" y="1060" width="3" height="3" fill="#999" />
          <circle cx="1718.500" cy="1059.500" r="5.500" fill="#d9202d" /><path d="M1716 1057L1721 1062M1721 1057L1716 1062" stroke="#fff" stroke-width="1.400" />
          <path d="M1743 1045H1763V1062H1756L1753 1065L1750 1062H1743Z" fill="#fff" /><path d="M1747 1049.500H1759M1747 1053.500H1759M1747 1057.500H1755" stroke="#111" stroke-width="1.200" />
        </svg>
        <span class="lang"><span v-fit="29" class="fit">ENG</span></span>
        <div class="clock">
          <div><span v-fit="35" class="fit">15:16</span></div>
          <div><span v-fit="76" class="fit">05-07-2017</span></div>
        </div>
        <i class="peek"></i>
      </div>
    </footer>
  </div>
</template>

<style>
html, body { margin: 0; overflow: hidden; background: #fff; }
</style>

<style scoped>
* { box-sizing: border-box; }
svg { display: block; flex: none; }
p { margin: 0; }
.screen { width: 1920px; height: 1080px; display: flex; flex-direction: column; overflow: hidden; font-family: "Open Sans", "Noto Sans", sans-serif; }
.fit { display: inline-block; white-space: nowrap; transform-origin: 0 50%; }
.titlebar { height: 36px; background: #3b3b3b; border-bottom: 1px solid #252525; display: flex; flex: none; position: relative; }
.tabshape { width: 310px; }
.tabtitle { position: absolute; left: 55px; top: 8px; font-size: 14.500px; line-height: 21px; color: #1d1d1d; }
.user { margin-left: 1420px; width: 62px; height: 23px; border: 1px solid #777; border-top: 0; border-radius: 0 0 6px 6px; color: #fff; font-size: 13.500px; line-height: 22px; padding-left: 9px; }
.wincontrols { margin-left: 8px; }
.chrome { height: 77px; flex: none; background: linear-gradient(#e9e9e9, #d2d2d2 45%, #c4c4c4); border-bottom: 1px solid #b5b5b5; display: flex; flex-direction: column; }
.toolbar { height: 40px; display: flex; align-items: center; padding-top: 5px; }
.nav { margin-top: 0; }
.omnibox { width: 1400px; height: 35px; background: #fff; border: 1px solid #999; border-radius: 3px; display: flex; align-items: center; padding: 0 6px 0 8px; }
.url { margin-left: 7px; font-size: 18px; line-height: 28px; padding-bottom: 1px; color: #111; }
.star { margin-left: auto; }
.exts { display: flex; margin-left: 2px; }
.exts > div { width: 40px; display: flex; justify-content: center; position: relative; }
.exts svg { width: 20px; height: 20px; }
.badged b { position: absolute; left: 24px; top: 13px; width: 14px; height: 14px; background: #83bd40; color: #fff; font: 11px/14px "Open Sans", sans-serif; text-align: center; }
.menu { margin-left: 17px; }
.bookmarks { height: 34px; padding: 0 0 0 15px; display: flex; align-items: center; font-size: 14.800px; color: #333; }
.bm { display: flex; align-items: center; flex: none; }
.bmicon { flex: none; display: flex; align-items: center; }
.bmtext { white-space: nowrap; overflow: hidden; line-height: 22px; }
.fade { width: 143px; -webkit-mask-image: linear-gradient(90deg, #000 82%, transparent); mask-image: linear-gradient(90deg, #000 82%, transparent); }
.q { font: bold 21px/20px "Liberation Serif", serif; color: #b02708; }
.more { margin-left: 122px; width: 23px; font-size: 17px; line-height: 20px; font-weight: 600; color: #555; }
.divider { width: 1px; height: 20px; background: #999; margin-right: 14px; }
.other { margin-left: 12px; line-height: 22px; }
.page { height: 917px; flex: none; display: flex; }
.view { width: 1899px; display: flex; flex-direction: column; background: #fff; }
.canvas { height: 873px; background: #333; position: relative; overflow: hidden; }
.keys { position: absolute; left: 656px; top: 0; width: 138px; height: 110.500px; padding: 1px 0 0 6px; background: rgba(95, 95, 95, .72); color: #fff; font: 12.800px/17.700px "Liberation Sans", sans-serif; }
.keys .low { position: relative; top: 1px; }
.legend { position: absolute; left: 919px; top: 4px; width: 225px; height: 81.500px; padding-left: 6px; background: #5e5e5e; color: #fff; font: 15px/18.700px "Liberation Sans", sans-serif; }
.legend p { position: relative; top: -1px; }
.g { color: #0f0; }
.y { color: #ff0; }
.r { color: #f00; }
.hscroll { height: 20px; margin-top: 24px; background: #f0f0f0; display: flex; }
.hthumb { width: 973px; height: 17px; margin-top: 2px; background: #c1c1c1; }
.vscroll { width: 21px; background: #f0f0f0; display: flex; flex-direction: column; }
.vthumb { width: 17px; height: 17px; margin-left: 2px; background: #c1c1c1; }
.down { margin-top: auto; }
.corner { height: 20px; background: #dcdcdc; }
.taskbar { height: 50px; flex: none; display: flex; background: linear-gradient(90deg, #10161a 0, #10161a 500px, #050708 650px, #020303 1100px, #10161a 1500px); }
.start { width: 60px; display: flex; align-items: center; justify-content: center; }
.search { width: 430px; background: #333; color: #9a9a9a; font-size: 17.500px; line-height: 50px; padding-left: 15px; }
.apps { display: flex; }
.apps > div { width: 62px; display: flex; align-items: center; justify-content: center; position: relative; }
.apps > .tv { padding-right: 2px; }
.apps > .active { background: #393b3c; }
.open::after { content: ""; position: absolute; left: 6px; right: 5px; bottom: 0; height: 3px; background: #76b9ed; }
.active::after { left: 0; right: 0; }
.tray { margin-left: auto; display: flex; align-items: center; color: #eee; }
.lang { font-size: 15.500px; width: 47px; padding-left: 1px; line-height: 48px; }
.clock { width: 82px; height: 50px; display: flex; flex-direction: column; align-items: center; padding-top: 3px; font-size: 15.300px; line-height: 21px; }
.peek { width: 1px; height: 50px; background: #66696b; margin: 0 5px 0 10px; }
</style>
